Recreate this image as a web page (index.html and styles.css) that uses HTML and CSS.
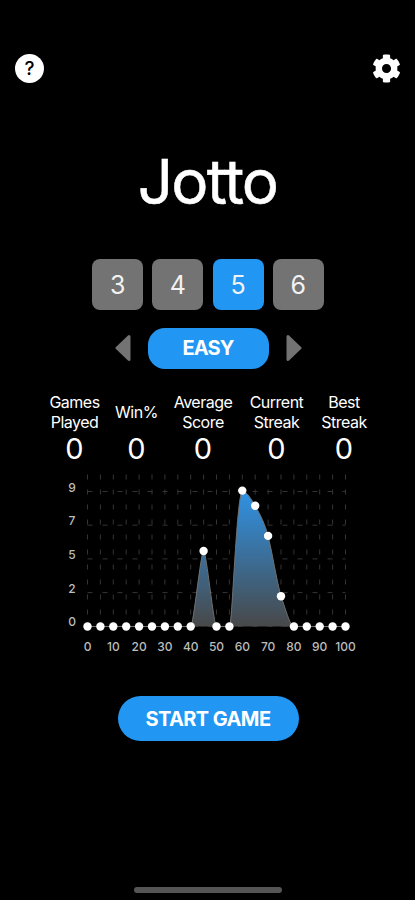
FILE: index.html
```html
<!DOCTYPE html>
<html lang="en">
<head>
    <meta charset="UTF-8">
    <meta name="viewport" content="width=device-width, initial-scale=1.0">
    <title>Jotto</title>
    <link rel="stylesheet" href="styles.css">
</head>
<body>
    <header class="topbar">
        <button class="help" aria-label="Help">?</button>
        <button class="settings" aria-label="Settings">
            <svg viewBox="0 0 512 512" width="29" height="29"><path fill="#fff" d="M487.4 315.7l-42.6-24.6c4.3-23.2 4.3-47 0-70.2l42.6-24.6c4.9-2.8 7.1-8.6 5.5-14-11.1-35.6-30-67.8-54.7-94.6-3.8-4.1-10-5.1-14.8-2.3L380.8 110c-17.9-15.4-38.5-27.3-60.8-35.1V25.8c0-5.6-3.9-10.5-9.4-11.7-36.7-8.2-74.3-7.8-109.2 0-5.5 1.2-9.4 6.1-9.4 11.7V75c-22.2 7.9-42.8 19.8-60.8 35.1L88.7 85.5c-4.9-2.8-11-1.9-14.8 2.3-24.7 26.7-43.6 58.9-54.7 94.6-1.7 5.4.6 11.2 5.5 14L67.3 221c-4.3 23.2-4.3 47 0 70.2l-42.6 24.6c-4.9 2.8-7.1 8.6-5.5 14 11.1 35.6 30 67.8 54.7 94.6 3.8 4.1 10 5.1 14.8 2.3l42.6-24.6c17.9 15.4 38.5 27.3 60.8 35.1v49.2c0 5.6 3.9 10.5 9.4 11.7 36.7 8.2 74.3 7.8 109.2 0 5.5-1.2 9.4-6.1 9.4-11.7v-49.2c22.2-7.9 42.8-19.8 60.8-35.1l42.6 24.6c4.9 2.8 11 1.9 14.8-2.3 24.7-26.7 43.6-58.9 54.7-94.6 1.5-5.5-.7-11.3-5.6-14.1zM256 336c-44.1 0-80-35.9-80-80s35.9-80 80-80 80 35.9 80 80-35.9 80-80 80z"/></svg>
        </button>
    </header>

    <h1 class="title">Jotto</h1>

    <!-- Word length -->
    <div class="lengths">
        <button class="length">3</button>
        <button class="length">4</button>
        <button class="length active">5</button>
        <button class="length">6</button>
    </div>

    <!-- Difficulty -->
    <div class="difficulty">
        <svg class="arrow" viewBox="0 0 16 28" width="16" height="28"><path d="M2 14L14 2.5V25.5Z"/></svg>
        <button class="level">EASY</button>
        <svg class="arrow" viewBox="0 0 16 28" width="16" height="28"><path d="M14 14L2 2.5V25.5Z"/></svg>
    </div>

    <div class="stats">
        <div class="stat"><div class="label">Games<br>Played</div><div class="value">0</div></div>
        <div class="stat"><div class="label">Win%</div><div class="value">0</div></div>
        <div class="stat"><div class="label">Average<br>Score</div><div class="value">0</div></div>
        <div class="stat"><div class="label">Current<br>Streak</div><div class="value">0</div></div>
        <div class="stat"><div class="label">Best<br>Streak</div><div class="value">0</div></div>
    </div>

    <svg class="chart" viewBox="53 470 310 190" width="310" height="190">
        <defs>
            <linearGradient id="area" gradientUnits="userSpaceOnUse" x1="0" y1="490" x2="0" y2="627">
                <stop offset="0" stop-color="#2f93e6"/>
                <stop offset="1" stop-color="#484848"/>
            </linearGradient>
        </defs>
        <g id="grid" class="grid"></g>
        <path class="area" d="M87.5 626.5H190.7C193.5 626.5 200.8 551 203.6 551C206.4 551 213.7 626.5 216.5 626.5H229.4C232.5 626.5 236 499 242.3 490.7C246 490.7 252 500 255.2 506C260 514 265 524 268.1 536C273 556 276 578 281 596.5C285 607 290 626.5 293.9 626.5H345.5"/>
        <g id="dots" class="dots"></g>
        <g id="labels" class="axis"></g>
    </svg>

    <button class="start">START GAME</button>

    <div class="home-bar"></div>

    <script>
        const scores = [0, 0, 0, 0, 0, 0, 0, 0, 0, 5, 0, 0, 9, 8, 6, 2, 0, 0, 0, 0, 0];
        const left = 87.5;
        const bottom = 626.5;
        const step = 12.9;
        let grid = '';
        let dots = '';
        let labels = '';

        scores.forEach((score, i) => {
            const x = left + i * step;
            const y = bottom - score * 15.1;
            grid += `<path d="M${x} 474.5V${bottom}"/>`;
            dots += `<circle cx="${x}" cy="${y}" r="4.2"/>`;
            if (i % 2 === 0) {
                labels += `<text x="${x}" y="650.7">${i * 5}</text>`;
            }
        });

        [9, 7, 5, 2, 0].forEach((value, i) => {
            const y = 491.5 + i * 33.7;
            grid += `<path d="M${left} ${y}H345.5"/>`;
            labels += `<text class="y" x="72" y="${y}">${value}</text>`;
        });

        document.getElementById('grid').innerHTML = grid;
        document.getElementById('dots').innerHTML = dots;
        document.getElementById('labels').innerHTML = labels;
    </script>
</body>
</html>
```
FILE: styles.css
```css
* {
    box-sizing: border-box;
}

body {
    font-family: Inter, Roboto, sans-serif;
    display: flex;
    flex-direction: column;
    align-items: center;
    height: 900px;
    background-color: #000;
    color: #fff;
    margin: 0;
    overflow: hidden;
}

button {
    font-family: inherit;
    color: #fff;
    border: none;
    padding: 0;
    cursor: pointer;
}

.topbar {
    display: flex;
    justify-content: space-between;
    width: 100%;
    padding: 54px 14px 0 15px;
}

.help {
    width: 29px;
    height: 29px;
    border-radius: 50%;
    background-color: #fff;
    color: #000;
    font-size: 19px;
    font-weight: 500;
    line-height: 29px;
}

.settings {
    height: 29px;
    background: none;
}

.settings svg {
    display: block;
}

.title {
    margin: 60px 0 0;
    font-size: 62px;
    font-weight: 400;
    line-height: 78px;
    letter-spacing: -1.7px;
    -webkit-text-stroke: 0.5px #fff;
}

.lengths {
    display: flex;
    gap: 9.2px;
    margin-top: 38px;
    padding-left: 1px;
}

.length {
    width: 51px;
    height: 51px;
    border-radius: 8px;
    background-color: #737373;
    color: #f2f2f2;
    font-size: 25px;
}

.active {
    background-color: #2196f3;
}

.difficulty {
    display: flex;
    align-items: center;
    gap: 17px;
    margin-top: 17.5px;
    padding-left: 1px;
}

.arrow {
    fill: #737373;
    stroke: #737373;
    stroke-width: 3;
    stroke-linejoin: round;
}

.level {
    width: 121px;
    height: 41px;
    border-radius: 17px;
    background-color: #2196f3;
    font-size: 20px;
    font-weight: 700;
    letter-spacing: -0.9px;
}

.stats {
    display: grid;
    grid-template-columns: 50px 42px 59px 56px 47px;
    gap: 16px;
    margin-top: 24.5px;
    padding-left: 2px;
}

.stat {
    display: flex;
    flex-direction: column;
    align-items: center;
    text-align: center;
}

.label {
    height: 39px;
    display: flex;
    align-items: center;
    font-size: 16px;
    line-height: 19.5px;
    letter-spacing: -0.5px;
    white-space: nowrap;
}

.value {
    font-size: 29px;
    line-height: 34px;
}

.chart {
    margin-top: 4px;
}

.grid path {
    stroke: #343434;
    stroke-width: 1;
    stroke-dasharray: 5 10;
}

.area {
    fill: url(#area);
    stroke: #707070;
    stroke-width: 1;
}

.dots {
    fill: #fff;
}

.axis {
    fill: #bdbdbd;
    font-size: 12px;
    font-weight: 500;
    text-anchor: middle;
}

.start {
    width: 181px;
    height: 45px;
    margin: 36px 0 0 1px;
    border-radius: 23px;
    background-color: #2196f3;
    font-size: 20px;
    font-weight: 700;
    letter-spacing: -0.6px;
}

.home-bar {
    width: 148px;
    height: 6px;
    margin-top: auto;
    margin-bottom: 7px;
    border-radius: 3px;
    background-color: #555;
}
```
